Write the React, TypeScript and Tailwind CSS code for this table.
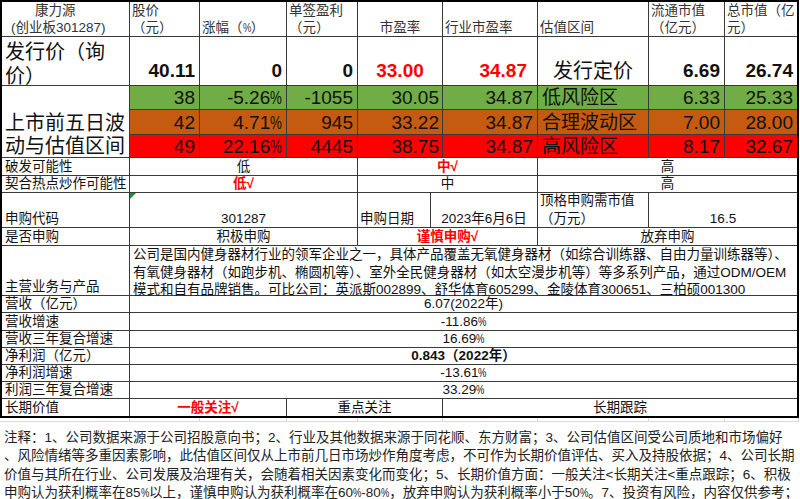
import React from "react";

const cell = "border-r border-b border-[#3a3a3a] flex min-w-0";
const red = "text-[#f00] font-bold";
const big = "text-[19px] leading-none";

function Pct() {
  return <span className="inline-block w-[0.62em] origin-left scale-x-[0.7]">%</span>;
}

function Num({ bg, children, bold = false }: { bg: string; children: React.ReactNode; bold?: boolean }) {
  return (
    <div className={`${cell} ${bg} ${big} ${bold ? "font-bold" : ""} items-center justify-end pr-[4px] whitespace-nowrap`}>
      {children}
    </div>
  );
}

function Band({ bg, v }: { bg: string; v: React.ReactNode[] }) {
  return (
    <>
      <Num bg={bg}>{v[0]}</Num>
      <Num bg={bg}>{v[1]}</Num>
      <Num bg={bg}>{v[2]}</Num>
      <div className={`${cell} ${bg} ${big} col-span-2 items-center justify-end pr-[3px]`}>{v[3]}</div>
      <Num bg={bg}>{v[4]}</Num>
      <div className={`${cell} ${bg} text-[19px] leading-none items-center pl-[4px] whitespace-nowrap`}>{v[5]}</div>
      <Num bg={bg}>{v[6]}</Num>
      <Num bg={bg}>{v[7]}</Num>
    </>
  );
}

function Label({ children }: { children: React.ReactNode }) {
  return <div className={`${cell} items-end pl-[3px] whitespace-nowrap`}>{children}</div>;
}

function Wide({ children, bold = false }: { children: React.ReactNode; bold?: boolean }) {
  return (
    <div className={`${cell} col-span-9 items-end justify-center whitespace-nowrap ${bold ? "font-bold" : ""}`}>
      {children}
    </div>
  );
}

export default function App() {
  return (
    <div className="w-[800px] h-[499px] overflow-hidden bg-white text-[#111] font-['Liberation_Sans','Noto_Sans_CJK_SC',sans-serif]">
      <div className="w-[799px] border-2 border-black overflow-hidden">
        <div className="-mr-px -mb-px grid grid-cols-[128px_70px_87px_71px_73px_12px_95px_111px_76px_73px] grid-rows-[35px_49px_24px_25px_23px_18px_17px_35px_18px_50px_17px_18px_17px_17px_17px_17px_18px] text-[13.5px] leading-[17px]">
          {/* header */}
          <div className={`${cell} flex-col items-start justify-center pl-[9px] text-[#333]`}>
            <span className="self-start pl-[24px]">康力源</span>
            <span>(创业板301287)</span>
          </div>
          <div className={`${cell} flex-col justify-center pl-[2px] text-[#333]`}>
            <span>股价</span>
            <span>（元）</span>
          </div>
          <div className={`${cell} items-end pl-[2px] text-[#333] whitespace-nowrap`}>
            涨幅（<Pct />）
          </div>
          <div className={`${cell} flex-col justify-center pl-[2px] text-[#333]`}>
            <span>单签盈利</span>
            <span>（元）</span>
          </div>
          <div className={`${cell} col-span-2 items-end justify-center text-[#333]`}>市盈率</div>
          <div className={`${cell} items-end pl-[2px] text-[#333]`}>行业市盈率</div>
          <div className={`${cell} items-end pl-[2px] text-[#333]`}>估值区间</div>
          <div className={`${cell} flex-col justify-center pl-[2px] text-[#333]`}>
            <span>流通市值</span>
            <span>（亿元）</span>
          </div>
          <div className={`${cell} flex-col justify-center pl-[2px] text-[#333] whitespace-nowrap`}>
            <span>总市值（亿</span>
            <span>元）</span>
          </div>

          {/* 发行价 */}
          <div className={`${cell} items-end pl-[3px] text-[20px] leading-[24px]`}>
            <span className="translate-y-[3px]">
              发行价（询
              <br />
              价）
            </span>
          </div>
          <div className={`${cell} items-end justify-end pr-[4px] pb-[5px] ${big} font-bold`}>40.11</div>
          <div className={`${cell} items-end justify-end pr-[4px] pb-[5px] ${big} font-bold`}>0</div>
          <div className={`${cell} items-end justify-end pr-[4px] pb-[5px] ${big} font-bold`}>0</div>
          <div className={`${cell} col-span-2 items-end justify-center pb-[5px] ${big} text-[#f00] font-bold`}>33.00</div>
          <div className={`${cell} items-end justify-end pr-[10px] pb-[5px] ${big} text-[#f00] font-bold`}>34.87</div>
          <div className={`${cell} items-end justify-center pb-[4px] text-[20px] leading-none`}>发行定价</div>
          <div className={`${cell} items-end justify-end pr-[4px] pb-[5px] ${big} font-bold`}>6.69</div>
          <div className={`${cell} items-end justify-end pr-[4px] pb-[5px] ${big} font-bold`}>26.74</div>

          {/* 上市前五日 */}
          <div className={`${cell} row-span-3 items-end pl-[3px] text-[20px] leading-[23px]`}>
            <span className="translate-y-[1px]">
              上市前五日波
              <br />
              动与估值区间
            </span>
          </div>
          <Band
            bg="bg-[#70ad47]"
            v={["38", <>-5.26<Pct /></>, "-1055", "30.05", "34.87", "低风险区", "6.33", "25.33"]}
          />
          <Band
            bg="bg-[#c55a11]"
            v={["42", <>4.71<Pct /></>, "945", "33.22", "34.87", "合理波动区", "7.00", "28.00"]}
          />
          <Band
            bg="bg-[#ff0000]"
            v={["49", <>22.16<Pct /></>, "4445", "38.75", "34.87", "高风险区", "8.17", "32.67"]}
          />

          {/* 破发 */}
          <Label>破发可能性</Label>
          <div className={`${cell} col-span-3 items-end justify-center`}>低</div>
          <div className={`${cell} col-span-3 items-end justify-center ${red}`}>中√</div>
          <div className={`${cell} col-span-3 items-end justify-center`}>高</div>

          {/* 契合 */}
          <Label>契合热点炒作可能性</Label>
          <div className={`${cell} col-span-3 items-end justify-center ${red}`}>低√</div>
          <div className={`${cell} col-span-3 items-end justify-center`}>中</div>
          <div className={`${cell} col-span-3 items-end justify-center`}>高</div>

          {/* 申购代码 */}
          <Label>申购代码</Label>
          <div className={`${cell} col-span-3 items-end justify-center relative`}>
            <span className="absolute left-0 top-0 w-0 h-0 border-t-[6px] border-t-[#1e8a3a] border-r-[6px] border-r-transparent" />
            301287
          </div>
          <div className={`${cell} items-end pl-[2px] whitespace-nowrap`}>申购日期</div>
          <div className={`${cell} col-span-2 items-end justify-center whitespace-nowrap`}>2023年6月6日</div>
          <div className={`${cell} flex-col justify-end pl-[2px] whitespace-nowrap leading-[17.5px]`}>
            <span>顶格申购需市值</span>
            <span>（万元）</span>
          </div>
          <div className={`${cell} col-span-2 items-end justify-center`}>16.5</div>

          {/* 是否申购 */}
          <Label>是否申购</Label>
          <div className={`${cell} col-span-3 items-end justify-center`}>积极申购</div>
          <div className={`${cell} col-span-3 items-end justify-center ${red}`}>谨慎申购√</div>
          <div className={`${cell} col-span-3 items-end justify-center`}>放弃申购</div>

          {/* 主营 */}
          <Label>主营业务与产品</Label>
          <div className={`${cell} col-span-9 flex-col items-start pl-[3px] leading-[17.5px] whitespace-nowrap`}>
            <span>公司是国内健身器材行业的领军企业之一，具体产品覆盖无氧健身器材（如综合训练器、自由力量训练器等）、</span>
            <span>有氧健身器材（如跑步机、椭圆机等）、室外全民健身器材（如太空漫步机等）等多系列产品，通过ODM/OEM</span>
            <span>模式和自有品牌销售。可比公司：英派斯002899、舒华体育605299、金陵体育300651、三柏硕001300</span>
          </div>

          <Label>营收（亿元）</Label>
          <Wide>6.07(2022年)</Wide>
          <Label>营收增速</Label>
          <Wide>-11.86<Pct /></Wide>
          <Label>营收三年复合增速</Label>
          <Wide>16.69<Pct /></Wide>
          <Label>净利润（亿元）</Label>
          <Wide bold>0.843（2022年）</Wide>
          <Label>净利润增速</Label>
          <Wide>-13.61<Pct /></Wide>
          <Label>利润三年复合增速</Label>
          <Wide>33.29<Pct /></Wide>

          {/* 长期价值 */}
          <Label>长期价值</Label>
          <div className={`${cell} col-span-2 items-end justify-center ${red}`}>一般关注√</div>
          <div className={`${cell} col-span-3 items-end justify-center`}>重点关注</div>
          <div className={`${cell} col-span-4 items-end justify-center`}>长期跟踪</div>
        </div>
      </div>

      {/* sheet gridlines under the table */}
      <div className="w-[799px] h-[4px] grid grid-cols-[130px_70px_87px_71px_85px_95px_111px_76px_74px] border-b border-[#d9d9d9]">
        {Array.from({ length: 9 }).map((_, i) => (
          <div key={i} className="border-r border-[#d9d9d9]" />
        ))}
      </div>

      {/* notes */}
      <div className="pt-[7px] pl-[4px] text-[13.5px] leading-[18.3px] text-[#222] whitespace-nowrap">
        <div>注释：1、公司数据来源于公司招股意向书；2、行业及其他数据来源于同花顺、东方财富；3、公司估值区间受公司质地和市场偏好</div>
        <div>、风险情绪等多重因素影响，此估值区间仅从上市前几日市场炒作角度考虑，不可作为长期价值评估、买入及持股依据；4、公司长期</div>
        <div>价值与其所在行业、公司发展及治理有关，会随着相关因素变化而变化；5、长期价值方面：一般关注&lt;长期关注&lt;重点跟踪；6、积极</div>
        <div>申购认为获利概率在85<Pct />以上，谨慎申购认为获利概率在60<Pct />-80<Pct />，放弃申购认为获利概率小于50<Pct />。7、投资有风险，内容仅供参考；</div>
      </div>
    </div>
  );
}
